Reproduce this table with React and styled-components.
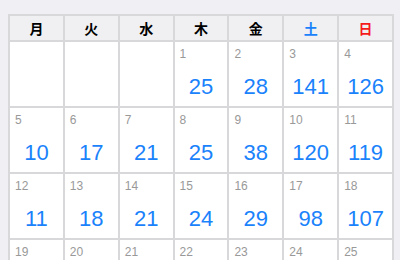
import React from "react";
import styled, { createGlobalStyle } from "styled-components";

const Global = createGlobalStyle`
  html, body { margin: 0; padding: 0; background: #efeff4; }
  body { font-family: "Liberation Sans", Arial, sans-serif; }
`;

const Page = styled.div`
  padding: 14px 6px 0 8px;
  width: 400px;
  box-sizing: border-box;
`;

const Grid = styled.div`
  display: grid;
  grid-template-columns: repeat(7, 1fr);
  grid-auto-rows: 64px;
  grid-template-rows: 24px;
  gap: 2px;
  padding: 2px;
  background: #d8d8da;
`;

const HeadCell = styled.div`
  background: #f0f0f3;
  display: flex;
  align-items: center;
  justify-content: center;
  font-family: "Noto Sans CJK JP", "Liberation Sans", sans-serif;
  font-weight: 700;
  font-size: 14px;
  color: ${(p) => p.$color || "#000"};
`;

const DayCell = styled.div`
  background: #fff;
  display: flex;
  flex-direction: column;
  padding: 5px 5px 0 5px;
  box-sizing: border-box;
`;

const DateNum = styled.div`
  font-size: 12px;
  line-height: 14px;
  color: #999;
`;

const Count = styled.div`
  margin-top: 13px;
  text-align: center;
  font-size: 22px;
  line-height: 26px;
  color: #1a82fb;
`;

const heads = [
  { t: "月" },
  { t: "火" },
  { t: "水" },
  { t: "木" },
  { t: "金" },
  { t: "土", c: "#1a82fb" },
  { t: "日", c: "#f51b1b" },
];

const cells = [
  null, null, null,
  [1, 25], [2, 28], [3, 141], [4, 126],
  [5, 10], [6, 17], [7, 21], [8, 25], [9, 38], [10, 120], [11, 119],
  [12, 11], [13, 18], [14, 21], [15, 24], [16, 29], [17, 98], [18, 107],
  [19, 22], [20, 19], [21, 23], [22, 26], [23, 31], [24, 102], [25, 110],
];

export default function App() {
  return (
    <Page>
      <Global />
      <Grid>
        {heads.map((h) => (
          <HeadCell key={h.t} $color={h.c}>{h.t}</HeadCell>
        ))}
        {cells.map((c, i) => (
          <DayCell key={i}>
            {c && (
              <>
                <DateNum>{c[0]}</DateNum>
                <Count>{c[1]}</Count>
              </>
            )}
          </DayCell>
        ))}
      </Grid>
    </Page>
  );
}
